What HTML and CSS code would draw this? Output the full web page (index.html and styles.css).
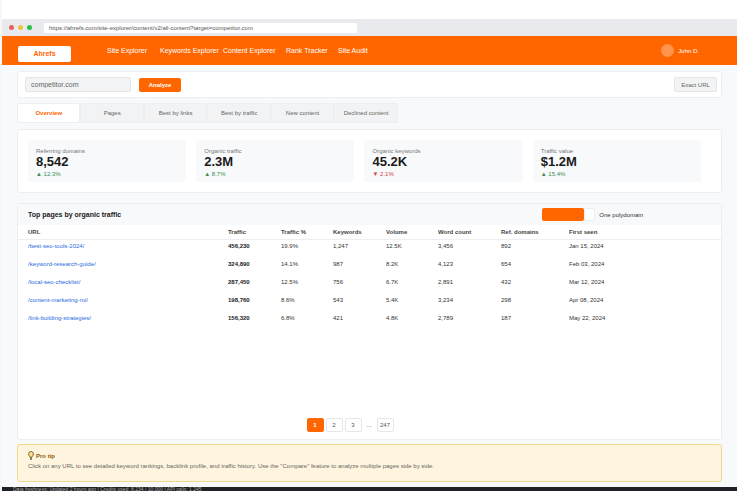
FILE: index.html
```html
<!DOCTYPE html>
<html lang="en">
	<head>
		<meta charset="utf-8">
		<meta name="viewport" content="width=device-width, initial-scale=1">
		<title>Site Explorer • Ahrefs</title>
		<link rel="stylesheet" href="styles.css">
	</head>
	<body>
		<div class="window">
			<div class="browser-bar">
				<span class="dot red"></span>
				<span class="dot yellow"></span>
				<span class="dot green"></span>
				<input class="address" type="text" aria-label="Address" value="https://ahrefs.com/site-explorer/content/v2/all-content?target=competitor.com">
			</div>

			<header class="header">
				<a class="logo" href="#">Ahrefs</a>
				<nav class="nav">
					<a href="#">Site Explorer</a>
					<a href="#">Keywords Explorer</a>
					<a href="#">Content Explorer</a>
					<a href="#">Rank Tracker</a>
					<a href="#">Site Audit</a>
				</nav>
				<a class="user" href="#"><span class="avatar"></span>John D.</a>
			</header>

			<main class="main">
				<form class="card search">
					<input class="target" type="text" aria-label="Target" value="competitor.com">
					<button class="analyze" type="button">Analyze</button>
					<button class="mode" type="button">Exact URL</button>
				</form>

				<div class="tabs">
					<button class="tab active" type="button">Overview</button>
					<button class="tab" type="button">Pages</button>
					<button class="tab" type="button">Best by links</button>
					<button class="tab" type="button">Best by traffic</button>
					<button class="tab" type="button">New content</button>
					<button class="tab" type="button">Declined content</button>
				</div>

				<section class="card stats">
					<div class="stat">
						<span class="label">Referring domains</span>
						<strong>8,542</strong>
						<span class="change up">▲ 12.3%</span>
					</div>
					<div class="stat">
						<span class="label">Organic traffic</span>
						<strong>2.3M</strong>
						<span class="change up">▲ 8.7%</span>
					</div>
					<div class="stat">
						<span class="label">Organic keywords</span>
						<strong>45.2K</strong>
						<span class="change down">▼ 2.1%</span>
					</div>
					<div class="stat">
						<span class="label">Traffic value</span>
						<strong>$1.2M</strong>
						<span class="change up">▲ 15.4%</span>
					</div>
				</section>

				<section class="card pages">
					<div class="pages-head">
						<h2>Top pages by organic traffic</h2>
						<div class="filter">
							<button class="filter-on" type="button" aria-label="All pages"></button>
							<input class="filter-check" type="checkbox" id="domain">
							<label for="domain">One polydomain</label>
						</div>
					</div>
					<table>
						<colgroup>
							<col class="col-url">
							<col class="col-traffic">
							<col class="col-share">
							<col class="col-traffic">
							<col class="col-share">
							<col class="col-words">
							<col class="col-refs">
							<col>
						</colgroup>
						<thead>
							<tr><th>URL</th><th>Traffic</th><th>Traffic %</th><th>Keywords</th><th>Volume</th><th>Word count</th><th>Ref. domains</th><th>First seen</th></tr>
						</thead>
						<tbody>
							<tr><td><a href="#">/best-seo-tools-2024/</a></td><td><b>456,230</b></td><td>19.9%</td><td>1,247</td><td>12.5K</td><td>3,456</td><td>892</td><td>Jan 15, 2024</td></tr>
							<tr><td><a href="#">/keyword-research-guide/</a></td><td><b>324,890</b></td><td>14.1%</td><td>987</td><td>8.2K</td><td>4,123</td><td>654</td><td>Feb 03, 2024</td></tr>
							<tr><td><a href="#">/local-seo-checklist/</a></td><td><b>287,450</b></td><td>12.5%</td><td>756</td><td>6.7K</td><td>2,891</td><td>432</td><td>Mar 12, 2024</td></tr>
							<tr><td><a href="#">/content-marketing-roi/</a></td><td><b>198,760</b></td><td>8.6%</td><td>543</td><td>5.4K</td><td>3,234</td><td>298</td><td>Apr 08, 2024</td></tr>
							<tr><td><a href="#">/link-building-strategies/</a></td><td><b>156,320</b></td><td>6.8%</td><td>421</td><td>4.8K</td><td>2,789</td><td>187</td><td>May 22, 2024</td></tr>
						</tbody>
					</table>
					<div class="pagination">
						<button class="page current" type="button">1</button>
						<button class="page" type="button">2</button>
						<button class="page" type="button">3</button>
						<span class="dots">...</span>
						<button class="page" type="button">247</button>
					</div>
				</section>

				<aside class="tip">
					<h3>
						<svg class="bulb" viewBox="0 0 6 9" aria-hidden="true"><path d="M2 6.300C2 5.200.6 4.600.6 3a2.400 2.500 0 0 1 4.800 0C5.400 4.600 4 5.200 4 6.300Z" fill="#ffe08a" stroke="#6b4a12" stroke-width=".8"/><path d="M2 7.200h2M2.200 8.400h1.600" stroke="#333" stroke-width=".8"/></svg>
						Pro tip
					</h3>
					<p>Click on any URL to see detailed keyword rankings, backlink profile, and traffic history. Use the "Compare" feature to analyze multiple pages side by side.</p>
				</aside>
			</main>

			<footer class="status">Data freshness: Updated 2 hours ago | Credits used: 8,234 / 10,000 | API calls: 1,245</footer>
		</div>
	</body>
</html>
```
FILE: styles.css
```css
*
{
	box-sizing: border-box;
}

body
{
	margin: 0;
	background: #fff;
	font-family: "Liberation Sans", Arial, sans-serif;
	font-size: 6px;
	line-height: 8px;
	color: #333;
}

button,
input
{
	font: inherit;
	color: inherit;
	margin: 0;
	padding: 0;
	border: none;
	border-radius: 2px;
}

button
{
	cursor: pointer;
}

a
{
	color: inherit;
	text-decoration: none;
}

.window
{
	display: flex;
	flex-direction: column;
	min-height: calc(100vh - 4px);
	padding-top: 19px;
	border-left: 2px solid #f6f7f8;
}

.browser-bar
{
	display: flex;
	align-items: center;
	gap: 4px;
	height: 17px;
	padding-left: 7px;
	background: #e8eaed;
}

.dot
{
	width: 5px;
	height: 5px;
	border-radius: 50%;
}

.red
{
	background: #ed5f5a;
}

.yellow
{
	background: #f5bf3f;
}

.green
{
	background: #2bc148;
}

.address
{
	width: 43%;
	height: 10px;
	margin-left: 8px;
	padding-left: 5px;
	border-radius: 1px;
	background: #fff;
	color: #555;
}

.header
{
	display: flex;
	align-items: center;
	height: 29px;
	padding: 0 38px 0 16px;
	background: #ff6600;
	color: #fff;
	font-size: 7px;
}

.logo
{
	width: 53px;
	margin-top: 6px;
	padding: 4px 0;
	border-radius: 2px;
	background: #fff;
	color: #ff6600;
	font-weight: bold;
	text-align: center;
}

.nav
{
	display: grid;
	grid-template-columns: 53px 63px 63px 52px auto;
	margin-left: 36px;
}

.user
{
	display: flex;
	align-items: center;
	gap: 4px;
	margin-left: auto;
	font-size: 6px;
}

.avatar
{
	width: 13px;
	height: 13px;
	border-radius: 50%;
	background: #ff944d;
}

.main
{
	display: flex;
	flex: 1;
	flex-direction: column;
	padding: 6px 15px 5px;
	background: #f8f9fb;
}

.card
{
	border: 1px solid #eceef1;
	border-radius: 3px;
	background: #fff;
}

.search
{
	display: flex;
	align-items: center;
	gap: 8px;
	height: 27px;
	padding: 0 4px 0 7px;
}

.target
{
	width: 106px;
	height: 15px;
	padding: 0 5px;
	border: 1px solid #e4e6e8;
	background: #f1f3f4;
	color: #666;
	font-size: 7px;
}

.analyze
{
	width: 42px;
	height: 14px;
	background: #ff6600;
	color: #fff;
	font-weight: bold;
}

.mode
{
	width: 43px;
	height: 15px;
	margin-left: auto;
	border: 1px solid #e4e6e8;
	background: #f1f3f4;
	color: #666;
}

.tabs
{
	display: flex;
	width: 54%;
	margin-top: 5px;
}

.tab
{
	flex: 1;
	height: 20px;
	border: 1px solid #eceef0;
	border-radius: 1px;
	background: #f1f3f4;
	color: #666;
}

.tab.active
{
	background: #fff;
	color: #ff6600;
	font-weight: bold;
}

.stats
{
	display: grid;
	grid-template-columns: 158fr 158fr 158fr 168fr;
	gap: 10px;
	margin-top: 6px;
	padding: 10px 20px 10px 10px;
}

.stat
{
	display: flex;
	flex-direction: column;
	height: 42px;
	padding: 7px 8px 0;
	border-radius: 3px;
	background: #f8f9fb;
}

.label
{
	color: #777;
}

.stat strong
{
	font-size: 13px;
	line-height: 13px;
	color: #1a1a1a;
}

.change
{
	margin-top: 2px;
}

.up
{
	color: #3c8c50;
}

.down
{
	color: #d04437;
}

.pages
{
	display: flex;
	flex: 1;
	flex-direction: column;
	margin-top: 10px;
}

.pages-head
{
	display: flex;
	align-items: center;
	justify-content: space-between;
	height: 21px;
	padding: 0 78px 0 10px;
	background: #f8f9fb;
}

h2
{
	margin: 0;
	font-size: 7px;
	color: #1a1a1a;
}

.filter
{
	display: flex;
	align-items: center;
}

.filter-on
{
	width: 42px;
	height: 13px;
	background: #ff6600;
}

.filter-check
{
	width: 11px;
	height: 13px;
	margin-right: 4px;
	border: 1px solid #eceef0;
	background: #fff;
	-webkit-appearance: none;
	        appearance: none;
}

table
{
	width: 100%;
	table-layout: fixed;
	border-collapse: collapse;
}

.col-url
{
	width: 200px;
}

.col-traffic
{
	width: 53px;
}

.col-share
{
	width: 52px;
}

.col-words
{
	width: 63px;
}

.col-refs
{
	width: 68px;
}

th,
td
{
	padding: 0 0 0 10px;
	text-align: left;
	white-space: nowrap;
}

th
{
	height: 14px;
	border-bottom: 1px solid #eceef0;
	color: #444;
}

td
{
	height: 18px;
	padding-bottom: 5px;
}

td a
{
	color: #2a6be0;
}

td b
{
	color: #1a1a1a;
}

.pagination
{
	display: flex;
	align-items: center;
	justify-content: center;
	gap: 2px;
	margin-top: auto;
	padding: 0 39px 7px 0;
}

.page
{
	width: 17px;
	height: 14px;
	border: 1px solid #e4e6e8;
	background: #fff;
	color: #555;
}

.page.current
{
	border-color: #ff6600;
	background: #ff6600;
	color: #fff;
	font-weight: bold;
}

.dots
{
	width: 11px;
	text-align: center;
}

.tip
{
	height: 38px;
	margin-top: 4px;
	padding: 6px 10px;
	border: 1px solid #f0d98a;
	border-radius: 3px;
	background: #fff5df;
}

.tip h3
{
	display: flex;
	align-items: center;
	gap: 2px;
	margin: 0;
	font-size: 6px;
	color: #8a5a0a;
}

.tip p
{
	margin: 2px 0 0;
	color: #666;
}

.bulb
{
	width: 6px;
	height: 9px;
}

/* thin strip, clips its text */
.status
{
	height: 4px;
	padding-left: 11px;
	overflow: hidden;
	background: #202124;
	color: #aaa;
	font-size: 5px;
	line-height: 4px;
}
```
